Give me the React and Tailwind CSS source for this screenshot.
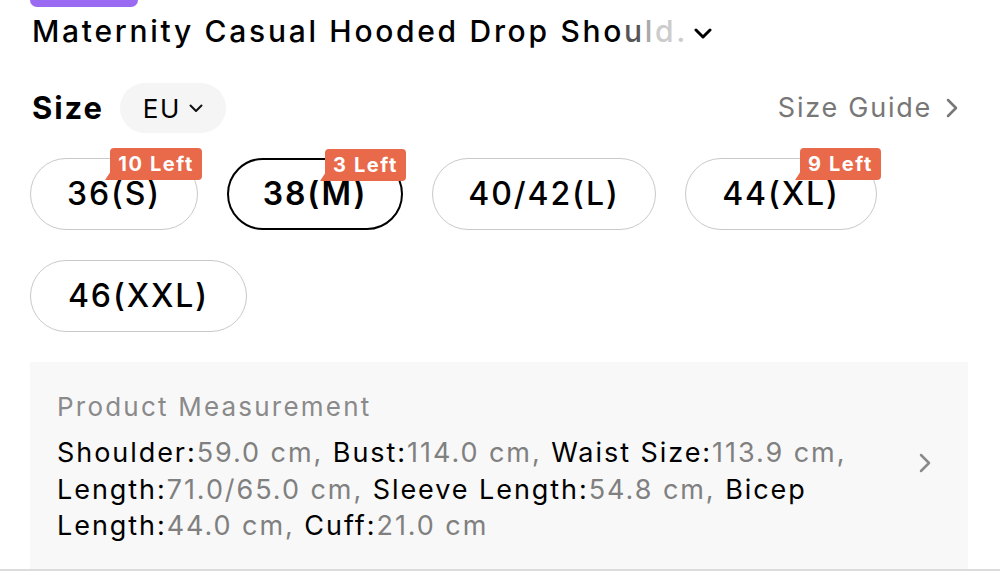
import React from 'react';

const sizes = [
  { label: '36(S)', width: 'w-[168px]', left: '10 Left' },
  { label: '38(M)', width: 'w-[176px]', left: '3 Left', selected: true },
  { label: '40/42(L)', width: 'w-[224px]' },
  { label: '44(XL)', width: 'w-[192px]', left: '9 Left' },
  { label: '46(XXL)', width: 'w-[217px]' },
];

const measureLines = [
  [['Shoulder:', '59.0 cm, '], ['Bust:', '114.0 cm, '], ['Waist Size:', '113.9 cm,']],
  [['Length:', '71.0/65.0 cm, '], ['Sleeve Length:', '54.8 cm, '], ['Bicep', '']],
  [['Length:', '44.0 cm, '], ['Cuff:', '21.0 cm']],
];

const StockBadge = ({ text }) => (
  <div className="absolute -top-[11px] -right-[5px] h-[32px] pl-[8px] pr-[8px] flex items-center bg-[#e86a4b] text-white text-[20px] font-bold tracking-[0.08em] rounded-[4px] rounded-bl-none">
    {text}
    {/* little tail on the bottom left */}
    <svg className="absolute -left-[5px] bottom-0" width="6" height="9" viewBox="0 0 6 9">
      <polygon points="6,0 6,9 0,9" fill="#e86a4b" />
    </svg>
  </div>
);

const SizePill = ({ size }) => (
  <div
    className={`relative h-[72px] ${size.width} rounded-full flex items-center justify-center text-[32px] tracking-[0.06em] text-black ${
      size.selected ? 'border-2 border-black font-semibold' : 'border border-[#c9c9c9] font-medium'
    }`}
  >
    {size.label}
    {size.left && <StockBadge text={size.left} />}
  </div>
);

export default function App() {
  return (
    <div className="w-[1000px] h-[571px] bg-white overflow-hidden relative" style={{ fontFamily: 'Inter, "Noto Sans", sans-serif' }}>
      {/* Trends tag, mostly scrolled off the top */}
      <div className="ml-[30px] h-[7px] overflow-hidden">
        <div className="-mt-[22px] h-[29px] w-[108px] rounded-[7px] bg-[#9b6af3] text-white text-[22px] font-bold flex items-center justify-center">
          Trends
        </div>
      </div>

      {/* Title */}
      <div className="mt-[4px] ml-[32px] flex items-center h-[40px]">
        <span className="text-[30px] font-medium text-black leading-[40px] tracking-[0.09em] whitespace-nowrap">
          Maternity Casual Hooded Drop Sho
          <span className="text-[#555]">u</span>
          <span className="text-[#aaa]">l</span>
          <span className="text-[#ccc]">d.</span>
        </span>
        <svg className="ml-[6px] mt-[6px]" width="18" height="12" viewBox="0 0 18 12">
          <path d="M2 2 L9 9 L16 2" stroke="#000" strokeWidth="3" fill="none" strokeLinecap="round" strokeLinejoin="round" />
        </svg>
      </div>

      {/* Size header */}
      <div className="mt-[32px] pl-[32px] pr-[42px] flex items-center justify-between h-[50px]">
        <div className="flex items-center">
          <span className="text-[31px] font-bold text-black tracking-[0.06em]">Size</span>
          <div className="ml-[16px] h-[50px] w-[106px] rounded-full bg-[#f5f5f5] flex items-center justify-center gap-[8px]">
            <span className="text-[26px] text-black tracking-[0.06em]">EU</span>
            <svg width="14" height="9" viewBox="0 0 14 9">
              <path d="M1.5 1.5 L7 7 L12.5 1.5" stroke="#111" strokeWidth="2" fill="none" strokeLinecap="round" strokeLinejoin="round" />
            </svg>
          </div>
        </div>
        <div className="flex items-center gap-[14px] text-[#777]">
          <span className="text-[27px] tracking-[0.065em]">Size Guide</span>
          <svg width="12" height="20" viewBox="0 0 12 20">
            <path d="M2 2 L10 10 L2 18" stroke="#777" strokeWidth="2.5" fill="none" strokeLinecap="round" strokeLinejoin="round" />
          </svg>
        </div>
      </div>

      {/* Size options */}
      <div className="mt-[25px] px-[30px] flex flex-wrap gap-x-[29px] gap-y-[30px]">
        {sizes.map(size => (
          <SizePill key={size.label} size={size} />
        ))}
      </div>

      {/* Product Measurement */}
      <div className="mt-[30px] mx-[30px] w-[938px] h-[207px] bg-[#f8f8f8] pt-[27px] pl-[27px] pr-[36px] flex items-start justify-between">
        <div>
          <div className="text-[26px] text-[#8a8a8a] leading-[36px] tracking-[0.085em]">Product Measurement</div>
          <div className="mt-[10px] text-[27px] leading-[36.5px] tracking-[0.072em] whitespace-nowrap">
            {measureLines.map((line, i) => (
              <div key={i}>
                {line.map(([k, v], j) => (
                  <span key={j}>
                    <span className="text-black">{k}</span>
                    <span className="text-[#808080]">{v}</span>
                  </span>
                ))}
              </div>
            ))}
          </div>
        </div>
        <svg className="mt-[63px]" width="14" height="22" viewBox="0 0 14 22">
          <path d="M3 3 L11 11 L3 19" stroke="#8a8a8a" strokeWidth="2.5" fill="none" strokeLinecap="round" strokeLinejoin="round" />
        </svg>
      </div>

      <div className="absolute bottom-0 left-0 w-full h-[2px] bg-[#dcdcdc]" />
    </div>
  );
}
